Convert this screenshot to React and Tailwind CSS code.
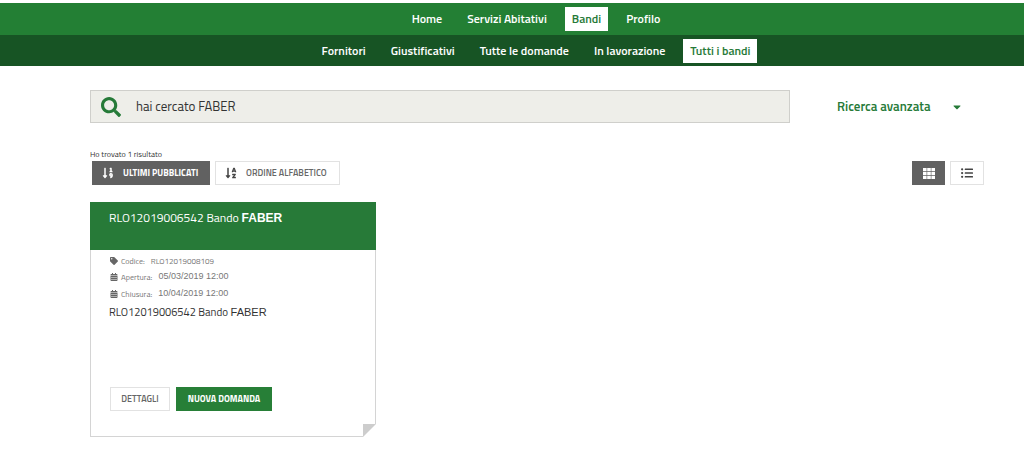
import React, { useState } from "react";
import {
  FaSearch,
  FaCaretDown,
  FaSortNumericDown,
  FaSortAlphaDown,
  FaListUl,
  FaTag,
  FaCalendarAlt,
} from "react-icons/fa";

const mainLinks = ["Home", "Servizi Abitativi", "Bandi", "Profilo"];
const subLinks = [
  "Fornitori",
  "Giustificativi",
  "Tutte le domande",
  "In lavorazione",
  "Tutti i bandi",
];

const NavBar = ({ links, active, className, label }) => (
  <nav
    aria-label={label}
    className={`flex items-center justify-center gap-[11px] pl-12 text-[12px] font-semibold ${className}`}
  >
    {links.map((link) => (
      <a
        key={link}
        href="#"
        className={
          link === active
            ? "bg-white px-[7px] leading-6 text-[#267a38]"
            : "px-[7px] leading-6 text-white"
        }
      >
        {link}
      </a>
    ))}
  </nav>
);

const GridIcon = () => (
  <svg width="12" height="11" viewBox="0 0 12 11" fill="currentColor">
    <path d="M0 0h3.6v3.2H0zM4.2 0h3.6v3.2H4.2zM8.4 0H12v3.2H8.4zM0 3.9h3.6v3.2H0zM4.2 3.9h3.6v3.2H4.2zM8.4 3.9H12v3.2H8.4zM0 7.8h3.6V11H0zM4.2 7.8h3.6V11H4.2zM8.4 7.8H12V11H8.4z" />
  </svg>
);

const App = () => {
  const [search, setSearch] = useState("hai cercato FABER");

  return (
    <div className="min-h-screen bg-white pt-[3px] font-['Titillium_Web','Roboto',sans-serif] text-[#333]">
      <header>
        <NavBar
          label="Principale"
          links={mainLinks}
          active="Bandi"
          className="h-8 bg-[#237f34]"
        />
        <NavBar
          label="Bandi"
          links={subLinks}
          active="Tutti i bandi"
          className="h-[31px] bg-[#175424]"
        />
      </header>

      <main className="pt-6 pr-10 pl-[90px]">
        <div className="flex items-center">
          <label className="flex h-[33px] flex-1 items-center border border-[#cfcfcb] bg-[#eeeee9] pl-[10px]">
            <FaSearch className="size-5 text-[#267a38]" />
            <input
              type="text"
              aria-label="Cerca"
              value={search}
              onChange={(e) => setSearch(e.target.value)}
              className="ml-[15px] flex-1 text-[13px] outline-none"
            />
          </label>
          <button
            type="button"
            className="flex w-[194px] items-center gap-5 pl-[47px] text-[13px] font-semibold text-[#267a38]"
          >
            Ricerca avanzata
            <FaCaretDown className="size-3" />
          </button>
        </div>

        <p className="mt-[25px] mb-px text-[8px] leading-3">Ho trovato 1 risultato</p>
        <div className="flex items-center justify-between pl-[2px]">
          <div className="flex gap-[5px] text-[9px]">
            <button
              type="button"
              className="flex h-6 w-[118px] items-center gap-[9px] border border-[#616161] bg-[#616161] pl-[9px] font-bold whitespace-nowrap text-white"
            >
              <FaSortNumericDown className="size-3" />
              ULTIMI PUBBLICATI
            </button>
            <button
              type="button"
              className="flex h-6 w-[125px] items-center gap-[9px] border border-[#e2e2e2] pl-[9px] font-semibold whitespace-nowrap text-[#666]"
            >
              <FaSortAlphaDown className="size-3 text-[#444]" />
              ORDINE ALFABETICO
            </button>
          </div>
          <div className="flex gap-[5px]">
            <button
              type="button"
              aria-label="Griglia"
              className="flex h-6 w-[33px] items-center justify-center bg-[#616161] text-white"
            >
              <GridIcon />
            </button>
            <button
              type="button"
              aria-label="Elenco"
              className="flex h-6 w-[34px] items-center justify-center border border-[#e2e2e2] text-[#444]"
            >
              <FaListUl className="size-3" />
            </button>
          </div>
        </div>

        <article className="relative mt-[17px] w-[286px] border border-[#d4d4d4]">
          <h2 className="-mx-px -mt-px h-12 bg-[#277a38] px-[19px] pt-[6px] text-[12px] leading-5 text-white">
            RLO12019006542 Bando{" "}
            <span className="font-['Liberation_Sans',sans-serif] font-bold">
              FABER
            </span>
          </h2>
          <div className="px-[18px] pt-[3px] pb-[25px]">
            <dl className="pl-px text-[8px] text-[#777]">
              <div className="flex h-4 items-center">
                <FaTag className="size-2 text-[#666]" />
                <dt className="ml-[3px]">Codice:</dt>
                <dd className="ml-[6px]">RLO12019008109</dd>
              </div>
              <div className="flex h-4 items-center">
                <FaCalendarAlt className="size-2 text-[#666]" />
                <dt className="ml-[3px]">Apertura:</dt>
                <dd className="ml-[6px] font-['Liberation_Sans',sans-serif] text-[9px]">
                  05/03/2019 12:00
                </dd>
              </div>
              <div className="flex h-[18px] items-center">
                <FaCalendarAlt className="size-2 text-[#666]" />
                <dt className="ml-[3px]">Chiusura:</dt>
                <dd className="ml-[6px] font-['Liberation_Sans',sans-serif] text-[9px]">
                  10/04/2019 12:00
                </dd>
              </div>
            </dl>
            <p className="h-[84px] text-[11px] leading-[18px]">
              RLO12019006542 Bando{" "}
              <span className="font-['Liberation_Sans',sans-serif]">FABER</span>
            </p>
            <div className="flex gap-[6px] pl-px text-[9px]">
              <button
                type="button"
                className="h-6 w-[60px] border border-[#e2e2e2] font-semibold text-[#666]"
              >
                DETTAGLI
              </button>
              <button
                type="button"
                className="h-6 w-24 bg-[#277f37] font-bold text-white"
              >
                NUOVA DOMANDA
              </button>
            </div>
          </div>
          {/* folded corner */}
          <svg
            className="absolute -right-px -bottom-px"
            width="13"
            height="13"
            viewBox="0 0 13 13"
          >
            <path d="M0 0h13v13H0z" fill="#fff" />
            <path d="M0 0h13L0 13z" fill="#cdcdcd" />
          </svg>
        </article>
      </main>
    </div>
  );
};

export default App;
